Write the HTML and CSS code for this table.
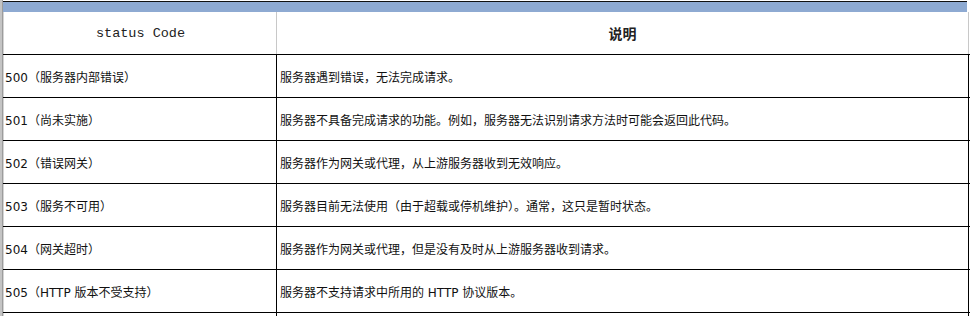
FILE: index.html
```html
<!DOCTYPE html>
<html lang="zh">
<head>
<meta charset="utf-8">
<title>status Code</title>
<link rel="stylesheet" href="styles.css">
</head>
<body>
<div class="sheet">
  <div class="gutter"></div>
  <div class="table">
    <div class="band"></div>
    <div class="row head">
      <div class="cell code mono">status Code</div>
      <div class="cell desc title">说明</div>
    </div>
    <div class="row">
      <div class="cell code">500（服务器内部错误）</div>
      <div class="cell desc">服务器遇到错误，无法完成请求。</div>
    </div>
    <div class="row">
      <div class="cell code">501（尚未实施）</div>
      <div class="cell desc">服务器不具备完成请求的功能。例如，服务器无法识别请求方法时可能会返回此代码。</div>
    </div>
    <div class="row">
      <div class="cell code">502（错误网关）</div>
      <div class="cell desc">服务器作为网关或代理，从上游服务器收到无效响应。</div>
    </div>
    <div class="row">
      <div class="cell code">503（服务不可用）</div>
      <div class="cell desc">服务器目前无法使用（由于超载或停机维护）。通常，这只是暂时状态。</div>
    </div>
    <div class="row">
      <div class="cell code">504（网关超时）</div>
      <div class="cell desc">服务器作为网关或代理，但是没有及时从上游服务器收到请求。</div>
    </div>
    <div class="row">
      <div class="cell code">505（HTTP 版本不受支持）</div>
      <div class="cell desc">服务器不支持请求中所用的 HTTP 协议版本。</div>
    </div>
    <div class="row tail">
      <div class="cell code"></div>
      <div class="cell desc"></div>
    </div>
  </div>
</div>
</body>
</html>
```
FILE: styles.css
```css
html, body {
  margin: 0;
  padding: 0;
  background: #fff;
}
body {
  width: 972px;
  height: 316px;
  overflow: hidden;
  font-family: "DejaVu Sans", "Noto Sans CJK SC", sans-serif;
  font-size: 12px;
  color: #111;
}
.sheet {
  display: flex;
  height: 316px;
  overflow: hidden;
}
.gutter {
  width: 2px;
  background: #c4c4c4;
  border-right: 1px solid #9c9c9c;
  flex: none;
}
.table {
  width: 967px;
  flex: none;
  display: flex;
  flex-direction: column;
  overflow: hidden;
}
.band {
  flex: none;
  height: 10px;
  margin-top: 1px;
  border-top: 1px solid #111;
  background: #8eaad2;
  margin-right: 3px;
}
.row {
  display: grid;
  grid-template-columns: 274px 692px;
  height: 42px;
  border-bottom: 1px solid #000;
  flex: none;
}
.row.tail {
  border-bottom: none;
  height: auto;
  flex: 1 1 auto;
  min-height: 0;
}
.cell {
  display: flex;
  align-items: center;
  white-space: nowrap;
}
.code {
  border-left: 1px solid #d4d4d4;
  border-right: 1px solid #000;
  padding-left: 1px;
}
.desc {
  border-right: 1px solid #000;
  padding-left: 3px;
}
.head .code,
.head .desc {
  border-right-color: #c8c8c8;
}
.mono {
  justify-content: center;
  font-family: "Liberation Mono", "Noto Sans CJK SC", monospace;
  font-size: 13.5px;
  color: #222;
  padding-top: 1px;
}
.title {
  justify-content: center;
  font-family: "Noto Sans CJK SC", sans-serif;
  font-weight: bold;
  font-size: 14px;
  color: #222;
  padding-left: 0;
}
.tail .code,
.tail .desc {
  border-right-color: #000;
}
```
